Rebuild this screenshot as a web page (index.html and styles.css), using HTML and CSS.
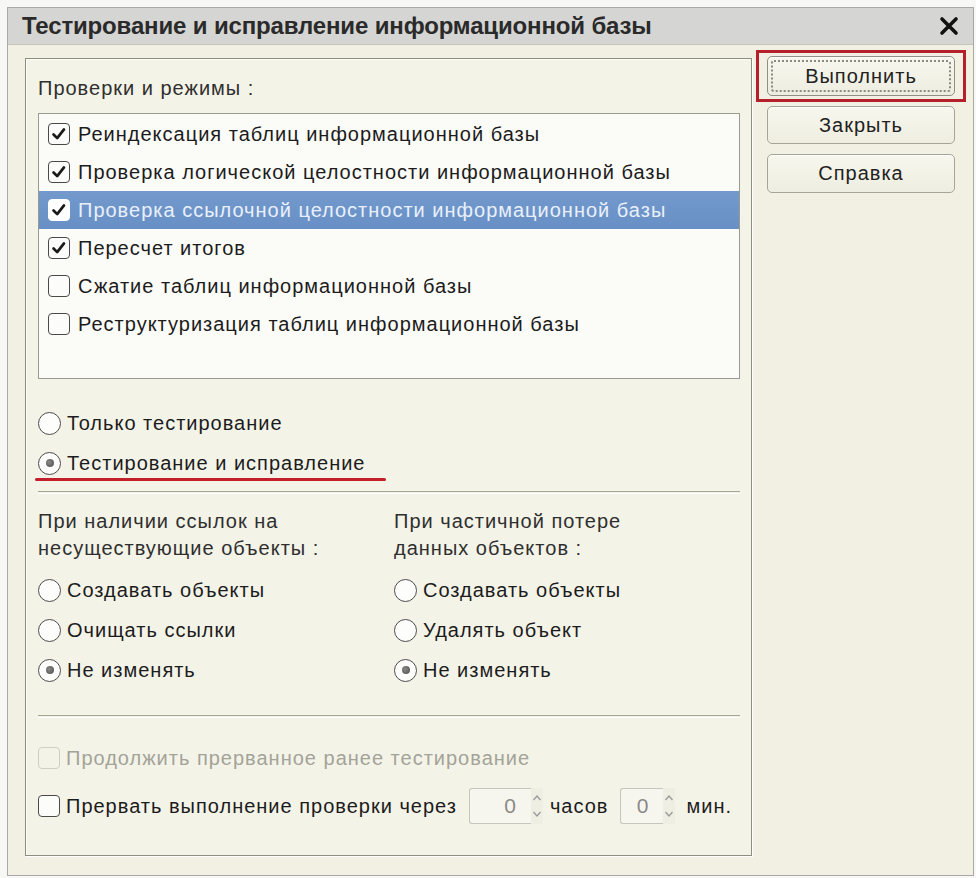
FILE: index.html
```html
<!DOCTYPE html>
<html lang="ru">
<head>
<meta charset="utf-8">
<title>Тестирование и исправление информационной базы</title>
<link rel="stylesheet" href="styles.css">
</head>
<body>
<div class="window">
  <div class="titlebar">
    <span class="title">Тестирование и исправление информационной базы</span>
    <svg class="close" width="20" height="20" viewBox="0 0 20 20"><path d="M3 3 L17 17 M17 3 L3 17" stroke="#111" stroke-width="3.6" stroke-linecap="round"/></svg>
  </div>
  <div class="wbody">
    <div class="panel">
      <div class="label">Проверки и режимы :</div>
      <div class="list">
        <div class="row"><span class="cb"><svg viewBox="0 0 22 22"><path d="M5 11.5 L9 15.5 L16.5 6" fill="none" stroke="#1a1a1a" stroke-width="3" stroke-linecap="round" stroke-linejoin="round"/></svg></span>Реиндексация таблиц информационной базы</div>
        <div class="row"><span class="cb"><svg viewBox="0 0 22 22"><path d="M5 11.5 L9 15.5 L16.5 6" fill="none" stroke="#1a1a1a" stroke-width="3" stroke-linecap="round" stroke-linejoin="round"/></svg></span>Проверка логической целостности информационной базы</div>
        <div class="row sel"><span class="cb"><svg viewBox="0 0 22 22"><path d="M5 11.5 L9 15.5 L16.5 6" fill="none" stroke="#1a1a1a" stroke-width="3" stroke-linecap="round" stroke-linejoin="round"/></svg></span>Проверка ссылочной целостности информационной базы</div>
        <div class="row"><span class="cb"><svg viewBox="0 0 22 22"><path d="M5 11.5 L9 15.5 L16.5 6" fill="none" stroke="#1a1a1a" stroke-width="3" stroke-linecap="round" stroke-linejoin="round"/></svg></span>Пересчет итогов</div>
        <div class="row"><span class="cb"></span>Сжатие таблиц информационной базы</div>
        <div class="row"><span class="cb"></span>Реструктуризация таблиц информационной базы</div>
      </div>

      <div class="modes">
        <div class="rrow"><span class="radio"></span>Только тестирование</div>
        <div class="rrow"><span class="radio on"></span>Тестирование и исправление</div>
      </div>
      <div class="redline"></div>
      <div class="sep"></div>

      <div class="cols">
        <div class="col first">
          <div class="clabel">При наличии ссылок на<br>несуществующие объекты :</div>
          <div class="rrow"><span class="radio"></span>Создавать объекты</div>
          <div class="rrow"><span class="radio"></span>Очищать ссылки</div>
          <div class="rrow"><span class="radio on"></span>Не изменять</div>
        </div>
        <div class="col second">
          <div class="clabel">При частичной потере<br>данных объектов :</div>
          <div class="rrow"><span class="radio"></span>Создавать объекты</div>
          <div class="rrow"><span class="radio"></span>Удалять объект</div>
          <div class="rrow"><span class="radio on"></span>Не изменять</div>
        </div>
      </div>
      <div class="sep sep2"></div>

      <div class="brow disabled"><span class="cb dis"></span>Продолжить прерванное ранее тестирование</div>
      <div class="brow"><span class="cb"></span>Прервать выполнение проверки через
        <span class="spin wide"><span class="val">0</span></span>
        <span class="arrows"><svg width="10" height="30" viewBox="0 0 10 30"><path d="M1.5 9 L5 5 L8.5 9" fill="none" stroke="#9a9a9a" stroke-width="1.3"/><path d="M1.5 21 L5 25 L8.5 21" fill="none" stroke="#9a9a9a" stroke-width="1.3"/></svg></span>
        <span class="unit">часов</span>
        <span class="spin narrow"><span class="val">0</span></span>
        <span class="arrows"><svg width="10" height="30" viewBox="0 0 10 30"><path d="M1.5 9 L5 5 L8.5 9" fill="none" stroke="#9a9a9a" stroke-width="1.3"/><path d="M1.5 21 L5 25 L8.5 21" fill="none" stroke="#9a9a9a" stroke-width="1.3"/></svg></span>
        <span class="unit last">мин.</span>
      </div>
    </div>

    <div class="buttons">
      <div class="focusbox"><div class="btn def"><span class="dots">Выполнить</span></div></div>
      <div class="btn b2">Закрыть</div>
      <div class="btn b3">Справка</div>
    </div>
  </div>
</div>
</body>
</html>
```

FILE: styles.css
```css
html, body {
  margin: 0;
  padding: 0;
  background: #f7f7f5;
}
body {
  font-family: "Liberation Sans", Arial, sans-serif;
  font-size: 20px;
  letter-spacing: 1px;
  color: #1c1c1c;
}
.window {
  margin: 7px 0 0 7px;
  width: 965px;
  border: 1px solid #a8a8a4;
  background: #f1f0e3;
}
.titlebar {
  height: 36px;
  background: #d5d5d3;
  display: flex;
  align-items: center;
  justify-content: space-between;
  padding: 0 14px 0 14px;
  border-bottom: 1px solid #c4c4bc;
}
.title {
  font-weight: bold;
  font-size: 24px;
  color: #2a2a2a;
  letter-spacing: -0.15px;
}
.close {
  display: block;
}
.wbody {
  display: flex;
  align-items: flex-start;
  padding: 13px 4px 19px 17px;
}
.panel {
  width: 702px;
  height: 796px;
  border: 1px solid #8e8e80;
  box-shadow: 1px 1px 0 #ffffff, inset 1px 1px 0 #fdfdf6;
  background: #f4f3e8;
  padding: 0 11px 0 12px;
  flex: none;
}
.label {
  margin-top: 16px;
  line-height: 26px;
  color: #2f2f2f;
}
.list {
  margin-top: 12px;
  height: 263px;
  border: 1px solid #9a9a90;
  background: #fbfbf7;
  padding-top: 1px;
}
.row {
  height: 38px;
  display: flex;
  align-items: center;
  padding-left: 9px;
  white-space: nowrap;
}
.row.sel {
  background: linear-gradient(#7399cc, #6890c6);
  color: #e9f0fb;
}
.cb {
  width: 20px;
  height: 20px;
  border: 1.5px solid #4a4a4a;
  border-radius: 4px;
  background: #fcfcfa;
  margin-right: 8px;
  flex: none;
  display: inline-flex;
}
.cb svg {
  width: 20px;
  height: 20px;
}
.row.sel .cb {
  background: #ffffff;
  border-color: #ffffff;
}
.cb.dis {
  border-color: #cfcfc6;
  background: transparent;
}
.modes {
  margin-top: 24px;
}
.rrow {
  height: 40px;
  display: flex;
  align-items: center;
  white-space: nowrap;
}
.radio {
  width: 21px;
  height: 21px;
  border: 1.5px solid #4c4c4c;
  border-radius: 50%;
  background: #fdfdfb;
  margin-right: 6px;
  flex: none;
  display: inline-flex;
  align-items: center;
  justify-content: center;
}
.radio.on::after {
  content: "";
  width: 8px;
  height: 8px;
  border-radius: 50%;
  background: radial-gradient(circle at 40% 40%, #8a8a8a, #4a4a4a);
}
.redline {
  width: 351px;
  height: 3px;
  margin: -5px 0 0 -3px;
  background: #c21f2b;
  border-radius: 2px;
}
.sep {
  margin-top: 10px;
  height: 1px;
  border-top: 1px solid #a3a396;
  border-bottom: 1px solid #ffffff;
}
.sep2 {
  margin-top: 25px;
}
.cols {
  display: flex;
}
.col.first {
  width: 356px;
  flex: none;
}
.col.second {
  flex: 1;
}
.clabel {
  margin-top: 14px;
  line-height: 27px;
  margin-bottom: 8px;
  color: #2f2f2f;
}
.brow {
  height: 48px;
  display: flex;
  align-items: center;
  white-space: nowrap;
}
.brow .cb {
  margin-right: 6px;
}
.disabled {
  margin-top: 16px;
  color: #a3a398;
}
.spin {
  height: 34px;
  border: 1px solid #c6c6bc;
  border-right: none;
  border-radius: 3px 0 0 3px;
  background: #f7f6ee;
  display: inline-flex;
  align-items: center;
  justify-content: flex-end;
  color: #8a8a86;
  font-size: 21px;
  letter-spacing: 0;
  flex: none;
}
.spin.wide {
  width: 46px;
  margin-left: 12px;
  padding-right: 15px;
}
.spin.narrow {
  width: 27px;
  padding-right: 15px;
}
.arrows {
  width: 12px;
  height: 36px;
  display: inline-flex;
  align-items: center;
  justify-content: center;
  background: #efeee2;
  flex: none;
}
.unit {
  margin: 0 12px 0 7px;
}
.unit.last {
  margin-left: 11px;
}
.buttons {
  margin-left: 4px;
  margin-top: -8px;
  width: 210px;
  display: flex;
  flex-direction: column;
}
.focusbox {
  border: 3px solid #b4202c;
  padding: 3px 8px;
}
.btn {
  height: 38px;
  border: 1px solid #a5a596;
  border-radius: 5px;
  background: linear-gradient(#f8f7ee, #eeede0);
  display: flex;
  align-items: center;
  justify-content: center;
  color: #222;
  box-shadow: inset 0 1px 0 #ffffff;
}
.btn.def {
  padding: 3px;
  height: 32px;
  border-color: #8f8f82;
}
.dots {
  flex: 1;
  align-self: stretch;
  border: 2px dotted #8a8a80;
  border-radius: 3px;
  display: flex;
  align-items: center;
  justify-content: center;
}
.b2 {
  margin: 4px 11px 0;
  height: 36px;
}
.b3 {
  margin: 10px 11px 0;
  height: 37px;
}
```
